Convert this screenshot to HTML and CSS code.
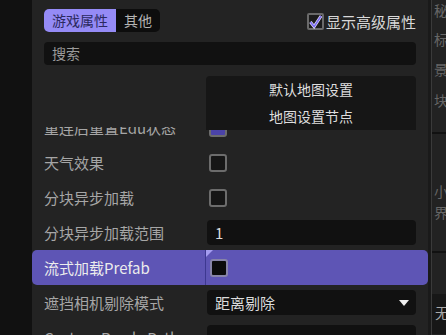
FILE: index.html
```html
<!DOCTYPE html>
<html lang="zh">
<head>
  <meta charset="UTF-8" />
  <title>游戏属性</title>
  <link rel="stylesheet" href="styles.css">
</head>
<body>
  <div class="rail"></div>

  <div class="panel">
    <!-- Toolbar -->
    <div class="toolbar">
      <div class="tabs">
        <span class="tab tab-active">游戏属性</span>
        <span class="tab">其他</span>
      </div>
      <label class="advanced">
        <span class="check-top">
          <svg width="14" height="14" viewBox="0 0 14 14"><path d="M1.5 7 L5.5 12 L13 0.5" fill="none" stroke="#e8e4ff" stroke-width="3.2"/><path d="M1.5 7 L5.5 12 L13 0.5" fill="none" stroke="#7b6cf0" stroke-width="1.8"/></svg>
        </span>
        显示高级属性
      </label>
    </div>

    <div class="search">搜索</div>

    <!-- Property list -->
    <div class="list">
      <div class="list-inner">
        <div class="row">
          <div class="label">重连后重置Edu状态</div>
          <div class="value"><span class="checkbox checked"></span></div>
        </div>
        <div class="row">
          <div class="label">天气效果</div>
          <div class="value"><span class="checkbox"></span></div>
        </div>
        <div class="row">
          <div class="label">分块异步加载</div>
          <div class="value"><span class="checkbox"></span></div>
        </div>
        <div class="row">
          <div class="label">分块异步加载范围</div>
          <div class="value"><div class="field">1</div></div>
        </div>
        <div class="row row-active">
          <div class="label">流式加载Prefab</div>
          <div class="value"><span class="mark"></span><span class="checkbox"></span></div>
        </div>
        <div class="row">
          <div class="label">遮挡相机剔除模式</div>
          <div class="value"><div class="field select">距离剔除<span class="arrow"></span></div></div>
        </div>
        <div class="row">
          <div class="label">Custom Ready Path</div>
          <div class="value"><div class="field"></div></div>
        </div>
      </div>
    </div>

    <!-- Dropdown menu -->
    <div class="popup">
      <div class="popup-item">默认地图设置</div>
      <div class="popup-item">地图设置节点</div>
    </div>
  </div>

  <div class="gutter"></div>

  <div class="side">
    <div class="side-group g1">
      <div>秘</div><div>标</div><div>景</div><div>块</div>
    </div>
    <div class="side-group g2">
      <div>小</div><div>界</div>
    </div>
    <div class="side-group g3">
      <div class="side-box">无</div>
    </div>
  </div>
</body>
</html>
```

FILE: styles.css
```css
body {
  margin: 0;
  height: 335px;
  overflow: hidden;
  display: flex;
  background: #111;
  font-family: "Noto Sans CJK SC", "Noto Sans", sans-serif;
  font-size: 15px;
  color: #a6a6a6;
}

.rail { width: 32px; background: #111; }

.panel {
  width: 396px;
  position: relative;
  background: #232323;
  display: flex;
  flex-direction: column;
}

.toolbar {
  display: flex;
  justify-content: space-between;
  align-items: center;
  padding: 9px 12px 0 12px;
  height: 23px;
}
.tabs { display: flex; border-radius: 5px; overflow: hidden; background: #0d0d0d; }
.tab { height: 23px; line-height: 23px; padding: 0 8px; font-size: 14px; color: #b4b4b4; }
.tab-active { background: #958bf6; color: #2b2960; }

.advanced { display: flex; align-items: center; gap: 2px; color: #d8d8d8; font-size: 15px; margin-top: 2px; }
.check-top {
  width: 13px; height: 13px;
  border: 2px solid #6a6a6a;
  border-radius: 2px;
  background: #1c1c1c;
  display: flex; align-items: center; justify-content: center;
}

.search {
  margin: 10px 12px 0 12px;
  height: 23px;
  line-height: 23px;
  padding-left: 8px;
  border-radius: 4px;
  background: #111;
  font-size: 14px;
  color: #9a9a9a;
}

.list { margin-top: 62px; flex: 1; overflow: hidden; }
.list-inner { margin-top: -17px; }

.row {
  height: 35px;
  display: grid;
  grid-template-columns: 173px 1fr;
  align-items: center;
  border-radius: 5px;
}
.label { padding-left: 12px; white-space: nowrap; }
.value { padding: 0 12px 0 2px; position: relative; height: 100%; display: flex; align-items: center; }

.row-active { background: #5e55b5; }
.row-active .label { color: #ececec; }
.row-active .value { border-left: 1px solid #3d3890; padding-left: 1px; }
.mark {
  position: absolute; left: 0; top: 0;
  border-top: 7px solid #a49cf0;
  border-right: 7px solid transparent;
}

.checkbox {
  width: 14px; height: 14px;
  margin-left: 2px;
  border: 2px solid #6c6c6c;
  border-radius: 3px;
  background: #161616;
}
.row-active .checkbox { background: #0b0b0b; border-color: #8784a8; margin-left: 3px; }
.checkbox.checked { background: #4b43a8; }

.field {
  flex: 1;
  height: 25px;
  line-height: 25px;
  padding: 0 8px;
  border-radius: 4px;
  background: #111;
  color: #dcdcdc;
}
.select { display: flex; justify-content: space-between; align-items: center; }
.arrow {
  border-top: 6px solid #f0f0f0;
  border-left: 5px solid transparent;
  border-right: 5px solid transparent;
  margin-right: -1px;
}

.popup {
  position: absolute;
  left: 174px;
  top: 76px;
  width: 210px;
  height: 54px;
  background: #161616;
  border-radius: 4px 4px 0 0;
}
.popup-item { height: 27px; line-height: 27px; text-align: center; font-size: 14px; color: #dedede; }

.gutter { width: 3px; background: #1a1a1a; }

.side {
  flex: 1;
  border-left: 1px solid #3a3a3a;
  background: #222;
  color: #666;
  font-size: 14px;
  overflow: hidden;
  white-space: nowrap;
}
.side-group { padding-left: 2px; }
.g1 { height: 136px; line-height: 29px; margin-top: -4px; border-bottom: 2px solid #111; }
.g1 div:nth-child(n+3) { line-height: 31px; }
.g2 { height: 119px; padding-top: 47px; box-sizing: border-box; line-height: 21px; border-bottom: 2px solid #111; }
.g3 { padding-top: 41px; }
.side-box { height: 40px; line-height: 36px; background: #171717; color: #aaa; padding-left: 3px; margin-left: -2px; }
```
